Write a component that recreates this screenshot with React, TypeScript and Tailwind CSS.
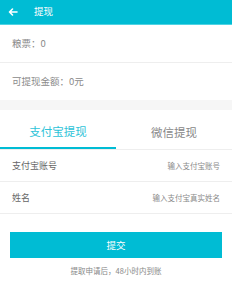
export default function App() {
  return (
    <div
      className="w-[232px] h-[281px] bg-white overflow-hidden"
      style={{ fontFamily: '"Noto Sans CJK SC", "Noto Sans", sans-serif' }}
    >
      {/* Header */}
      <div className="h-[25px] bg-[#00bcd4] border-b border-[#4fd3e3] flex items-center pl-[8px]">
        <svg width="10" height="10" viewBox="0 0 10 10" fill="none" stroke="white" strokeWidth="1.6" strokeLinecap="round" strokeLinejoin="round">
          <path d="M9 5H1.5M4.5 2L1.5 5l3 3" />
        </svg>
        <span className="ml-[16px] text-[9.5px] text-white leading-none">提现</span>
      </div>

      {/* Balances */}
      <div className="h-[38px] flex items-center px-[12px] border-b border-[#eeeeee]">
        <span className="text-[9.5px] text-[#8a8a8a]">粮票：0</span>
      </div>
      <div className="h-[37px] flex items-center px-[12px]">
        <span className="text-[9.5px] text-[#8a8a8a]">可提现金额：0元</span>
      </div>
      <div className="h-[10px] bg-[#f6f6f6]" />

      {/* Tabs */}
      <div className="flex h-[40px] border-b border-[#eeeeee]">
        <div className="flex-1 flex items-center justify-center pt-[6px] border-b-2 border-[#00bcd4]">
          <span className="text-[11.5px] text-[#2ec3d8]">支付宝提现</span>
        </div>
        <div className="flex-1 flex items-center justify-center pt-[6px]">
          <span className="text-[11.5px] text-[#888]">微信提现</span>
        </div>
      </div>

      {/* Inputs */}
      <div className="h-[32px] flex items-center justify-between px-[12px] border-b border-[#eeeeee]">
        <span className="text-[9px] text-[#666]">支付宝账号</span>
        <span className="text-[7.5px] text-[#8a8a8a]">输入支付宝账号</span>
      </div>
      <div className="h-[32px] flex items-center justify-between px-[12px] border-b border-[#eeeeee]">
        <span className="text-[9px] text-[#666]">姓名</span>
        <span className="text-[7.5px] text-[#8a8a8a]">输入支付宝真实姓名</span>
      </div>

      {/* Submit */}
      <div className="px-[10px] pt-[18px]">
        <button className="w-full h-[26px] bg-[#00bcd4] text-white text-[9.5px] flex items-center justify-center">
          提交
        </button>
        <p className="mt-[7px] text-center text-[7.5px] text-[#888]">提取申请后，48小时内到账</p>
      </div>
    </div>
  );
}
